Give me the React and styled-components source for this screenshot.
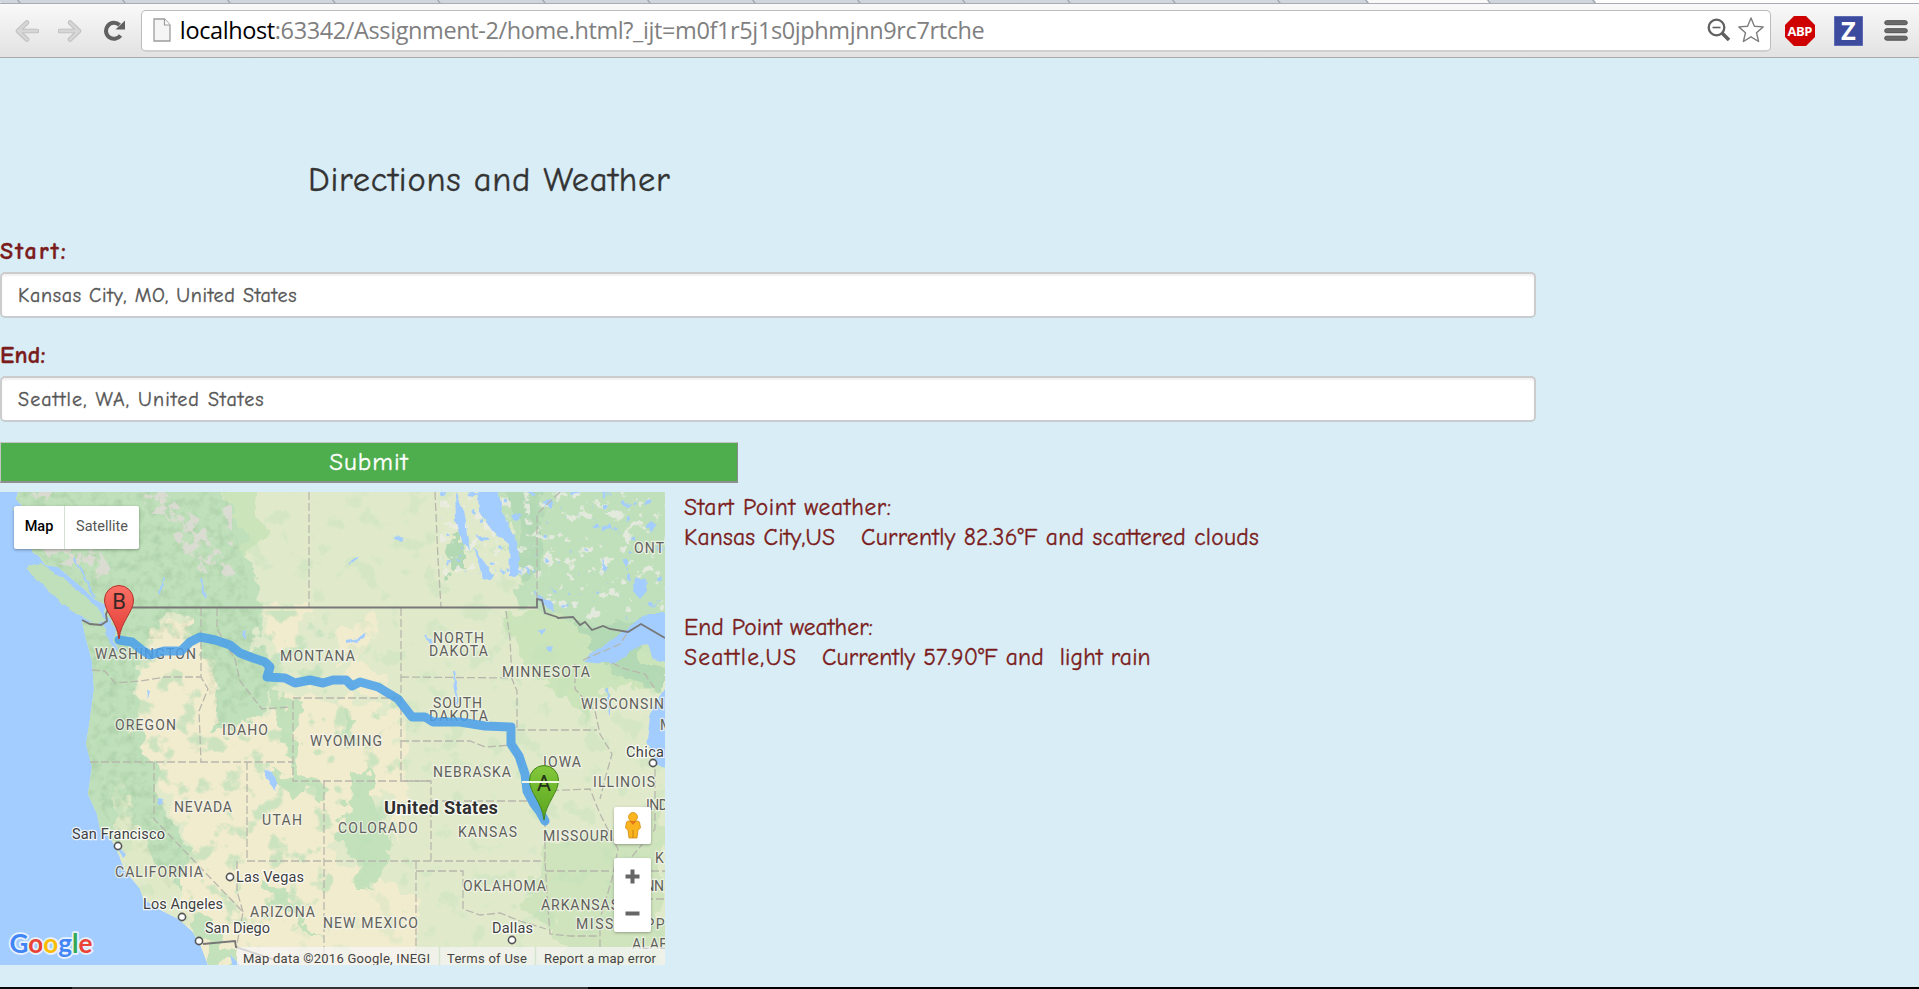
import React from 'react';
import styled, { createGlobalStyle } from 'styled-components';

const GlobalStyle = createGlobalStyle`
  * { box-sizing: border-box; }
  body { margin: 0; background: #d9edf7; overflow: hidden; }
`;

const casual = `"Comic Sans MS", "Comic Neue", "Open Sans", sans-serif`;

const Screen = styled.div`
  display: flex;
  flex-direction: column;
  width: 1919px;
  height: 989px;
  background: #d9edf6;
  overflow: hidden;
`;

/* ---------- browser chrome ---------- */
const TabStrip = styled.div`
  display: flex;
  height: 4px;
  overflow: hidden;
  background: #fdfdfd;
  border-bottom: 1px solid #a9adb3;
`;
const Tab = styled.div`
  width: ${(p) => p.$w}px;
  background: ${(p) => (p.$active ? '#f8f8f8' : '#d0d6de')};
  border-right: 2px solid #a4a9b0;
  transform: skewX(35deg);
`;
const Toolbar = styled.div`
  display: flex;
  align-items: center;
  height: 54px;
  padding: 0 11px 0 15px;
  background: linear-gradient(#f9f9f9, #e2e2e2);
  border-bottom: 1px solid #a9a9a9;
`;
const NavButtons = styled.div`
  display: flex;
  align-items: center;
  width: 126px;
`;
const Icon = styled.svg`
  display: block;
  flex: none;
  margin-left: ${(p) => p.$gap || 0}px;
`;
const Omnibox = styled.div`
  display: flex;
  align-items: center;
  width: 1632px;
  height: 42px;
  padding: 0 5px 0 11px;
  background: #fff;
  border: 1px solid #bcbcbc;
  border-bottom: 2px solid #cfcfcf;
  border-radius: 5px;
`;
const Url = styled.div`
  flex: 1;
  padding-left: 9px;
  font: 23.5px/34px "Open Sans", sans-serif;
  letter-spacing: ${(p) => p.$track}px;
  color: #808080;
  white-space: nowrap;
`;
const Host = styled.span`
  color: #000;
`;
const Extensions = styled.div`
  display: flex;
  align-items: center;
  margin-left: 14px;
`;

/* ---------- page ---------- */
const Page = styled.main`
  flex: 1;
  display: flex;
  flex-direction: column;
  align-items: flex-start;
  font-family: ${casual};
  -webkit-text-stroke: 0.35px currentColor;
`;
const Title = styled.h2`
  margin: 99px 0 0 308px;
  font-size: 34.5px;
  font-weight: 400;
  line-height: 46px;
  letter-spacing: ${(p) => p.$track}px;
  color: #333;
  white-space: nowrap;
`;
const Label = styled.label`
  display: block;
  height: 30px;
  margin-top: ${(p) => p.$top}px;
  font-size: 24px;
  font-weight: 700;
  line-height: 30px;
  letter-spacing: ${(p) => p.$track}px;
  color: #7b1c1c;
`;
const Input = styled.div`
  width: 1536px;
  height: 46px;
  margin-top: ${(p) => p.$top}px;
  padding-left: 16px;
  font-size: 20px;
  line-height: 43px;
  letter-spacing: ${(p) => p.$track}px;
  color: #555;
  background: #fff;
  border: 2px solid #ccc;
  border-bottom-color: #c8cbd0;
  border-radius: 5px;
  box-shadow: inset 0 2px 2px rgba(0, 0, 0, 0.06);
`;
const Submit = styled.button`
  display: block;
  width: 738px;
  height: 41px;
  margin-top: 20px;
  padding: 0;
  font-family: ${casual};
  font-size: 25px;
  line-height: 38px;
  letter-spacing: ${(p) => p.$track}px;
  text-align: center;
  color: #fff;
  background: #4eae4e;
  border: 1px solid #c4c4c4;
  border-right-color: #8a8a8a;
  border-bottom: 2px solid #8f8f8f;
`;
const Results = styled.section`
  display: flex;
  margin-top: 9px;
`;
const Weather = styled.div`
  display: flex;
  flex-direction: column;
  margin-left: 19px;
`;
const WeatherLine = styled.div`
  display: flex;
  height: 30px;
  margin-top: ${(p) => p.$top || 0}px;
  font-size: 23.5px;
  line-height: 32px;
  letter-spacing: ${(p) => p.$track}px;
  color: #7b1c1c;
  white-space: pre;
`;
const Place = styled.span`
  width: ${(p) => p.$w}px;
  letter-spacing: ${(p) => p.$track}px;
`;
const Taskbar = styled.div`
  display: flex;
  height: 2px;
  background: #000;
`;
const TaskbarPart = styled.div`
  width: ${(p) => p.$w}px;
  background: ${(p) => p.$c};
`;

/* ---------- map ---------- */
const MapFrame = styled.div`
  position: relative;
  width: 665px;
  height: 473px;
  overflow: hidden;
  font-family: Roboto, sans-serif;
  -webkit-text-stroke: 0;
`;
const MapTypes = styled.div`
  position: absolute;
  left: 14px;
  top: 14px;
  display: flex;
  height: 43px;
  background: #fff;
  border-radius: 2px;
  box-shadow: 0 1px 3px rgba(0, 0, 0, 0.35);
`;
const MapType = styled.div`
  width: ${(p) => p.$w}px;
  font-size: 14.5px;
  font-weight: ${(p) => (p.$on ? 500 : 400)};
  line-height: 42px;
  text-align: center;
  color: ${(p) => (p.$on ? '#000' : '#565656')};
  border-left: ${(p) => (p.$on ? 0 : '1px solid #d5e0d5')};
`;
const MapControls = styled.div`
  position: absolute;
  right: 14px;
  top: 315px;
  display: flex;
  flex-direction: column;
  gap: 14px;
`;
const Control = styled.div`
  display: flex;
  flex-direction: column;
  align-items: center;
  justify-content: center;
  width: 37px;
  height: ${(p) => p.$h}px;
  background: #fff;
  border-radius: 2px;
  box-shadow: 0 1px 3px rgba(0, 0, 0, 0.3);
`;

const states = [
  ['WASHINGTON', 95, 660, 101], ['MONTANA', 280, 661.5, 75], ['NORTH', 433, 643.5, 51],
  ['DAKOTA', 429, 657, 59], ['SOUTH', 433, 708.5, 49], ['DAKOTA', 429, 722, 59],
  ['MINNESOTA', 502, 677.5, 88], ['WISCONSIN', 581, 710, 83], ['ONT', 634, 553.5, 30],
  ['OREGON', 115, 730.5, 61], ['IDAHO', 222, 735.5, 46], ['WYOMING', 310, 746.5, 72],
  ['NEVADA', 174, 812.5, 58], ['UTAH', 262, 826, 40], ['CALIFORNIA', 115, 877.5, 88],
  ['ARIZONA', 250, 917.5, 65], ['NEW MEXICO', 323, 928.5, 95], ['COLORADO', 338, 834, 80],
  ['NEBRASKA', 433, 777.5, 78], ['KANSAS', 458, 838, 59], ['OKLAHOMA', 463, 892, 83],
  ['ARKANSAS', 541, 911, 78], ['MISSOURI', 543, 842, 70], ['IOWA', 543, 768, 38],
  ['ILLINOIS', 593, 788, 62], ['IND', 646, 811, 22], ['K', 655, 863.5, 9], ['TENN', 629, 892, 35],
  ['MISSISSIPPI', 576, 929.5, 94], ['ALAB', 632, 949.5, 36], ['M', 660, 730.5, 11],
];
const cities = [
  ['San Francisco', 72, 839.5, 93, 118, 847], ['Las Vegas', 236, 883, 68, 230, 878],
  ['Los Angeles', 143, 909.5, 80, 182, 918], ['San Diego', 205, 934, 65, 199, 942],
  ['Dallas', 492, 934, 41, 512, 941], ['Chica', 626, 757.5, 38, 653, 764],
];
const dashed = [
  'M309 493V608', 'M435 493L438 560 441 608', 'M560 493L537 515V600', 'M401 609V782H431V862',
  'M506 612L510 640 512 680 517 692V731', 'M401 678L512 679', 'M401 742H470L485 748 512 746 522 768',
  'M400 699H293V782H431', 'M247 862H545', 'M324 782V962', 'M247 763V862', 'M90 763H293',
  'M154 763V820L243 913 237 945', 'M237 862V892L243 913', 'M92 671L105 672 115 684 140 682 165 678H201',
  'M201 609V678L208 690 199 712 201 763', 'M217 609V630L235 660 240 682 262 710 290 708',
  'M416 862V960', 'M416 872H463V910L480 916 500 914 520 922 546 930', 'M431 802H530',
  'M545 820V862L547 895 550 935 570 937H600', 'M546 872H612', 'M517 731H597', 'M540 792L590 790 600 815 618 850 612 880 600 920V950',
  'M575 665V690L595 712 600 735 612 755 605 780 600 800', 'M612 664L625 670 645 675 655 690',
  'M583 661L620 645 628 633', 'M655 770V830L630 860', 'M640 872H665', 'M612 900H665',
];
const coast =
  'M18 493L16 500 22 507 12 510 25 520 34 535 32 553 39 557 45 566 58 568 72 580 84 590 94 600 106 606 104 614 112 622 108 634 103 626 82 622 86 640 92 662 94 690 90 720 86 745 92 768 88 795 97 815 100 830 111 840 118 854 125 872 140 890 143 900 160 911 178 920 192 932 200 945 208 966H232L230 955 240 966H665V493Z';

function MapDrawing() {
  return (
    <svg width="665" height="473" viewBox="0 493 665 473" style={{ display: 'block' }}>
      <defs>
        <filter id="rough" x="-10%" y="-10%" width="120%" height="120%">
          <feTurbulence type="fractalNoise" baseFrequency="0.055" numOctaves="3" seed="4" />
          <feDisplacementMap in="SourceGraphic" scale="30" xChannelSelector="R" yChannelSelector="G" />
        </filter>
        <filter id="edge" x="-5%" y="-5%" width="110%" height="110%">
          <feTurbulence type="fractalNoise" baseFrequency="0.1" numOctaves="2" seed="8" />
          <feDisplacementMap in="SourceGraphic" scale="6" xChannelSelector="R" yChannelSelector="G" />
        </filter>
        <filter id="snow" x="0" y="0" width="100%" height="100%" colorInterpolationFilters="sRGB">
          <feTurbulence type="fractalNoise" baseFrequency="0.09" numOctaves="5" seed="11" />
          <feColorMatrix values="0 0 0 0 .93  0 0 0 0 .93  0 0 0 0 .9  14 0 0 0 -8.6" />
        </filter>
        <filter id="peaks" x="0" y="0" width="100%" height="100%" colorInterpolationFilters="sRGB">
          <feTurbulence type="fractalNoise" baseFrequency="0.09" numOctaves="5" seed="2" />
          <feColorMatrix values="0 0 0 0 .88  0 0 0 0 .86  0 0 0 0 .84  10 0 0 0 -4.7" />
        </filter>
        <filter id="ponds" x="0" y="0" width="100%" height="100%" colorInterpolationFilters="sRGB">
          <feTurbulence type="fractalNoise" baseFrequency="0.09" numOctaves="3" seed="23" />
          <feColorMatrix values="0 0 0 0 .64  0 0 0 0 .8  0 0 0 0 1  14 0 0 0 -9.6" />
        </filter>
        <filter id="woods" x="0" y="0" width="100%" height="100%" colorInterpolationFilters="sRGB">
          <feTurbulence type="fractalNoise" baseFrequency="0.045" numOctaves="4" seed="37" />
          <feColorMatrix values="0 0 0 0 .75  0 0 0 0 .88  0 0 0 0 .73  9 0 0 0 -5.2" />
        </filter>
        <filter id="relief" x="0" y="0" width="100%" height="100%" colorInterpolationFilters="sRGB">
          <feTurbulence type="fractalNoise" baseFrequency="0.11" numOctaves="5" seed="5" />
          <feColorMatrix values="0 0 0 0 .5  0 0 0 0 .66  0 0 0 0 .5  2.4 0 0 0 -1.05" />
        </filter>
        <clipPath id="land"><path d={coast} /></clipPath>
        <clipPath id="summits"><path d="M25 493H52L44 506ZM142 493H165L180 508 200 520 212 540 236 575 226 578 200 560 208 575 195 570 175 540 165 515 145 515ZM40 545L60 545 100 552 112 572 104 588 90 575 70 568 50 562ZM222 505L232 505 232 540 238 550 228 545Z" /></clipPath>
        <clipPath id="shield"><path d="M520 493H665V615L600 625 520 590Z M440 493H520V580H440Z" /></clipPath>
        <clipPath id="west"><path d="M90 612H300L400 700 390 870 250 960 150 880 90 770Z M340 760H400V870H340Z" /></clipPath>
        <clipPath id="forest"><path d="M0 493H225L258 620 270 690 215 730 200 640 135 640V740L190 860 170 890 90 800Z" /></clipPath>
        <linearGradient id="red" x2="0" y2="1"><stop stopColor="#fb7064" /><stop offset="1" stopColor="#e03b35" /></linearGradient>
        <linearGradient id="green" x2="0" y2="1"><stop stopColor="#83c73c" /><stop offset="1" stopColor="#5aa51d" /></linearGradient>
      </defs>
      <rect y="493" width="665" height="473" fill="#a3ccff" />
      <g clipPath="url(#land)">
        <rect y="493" width="665" height="473" fill="#e0eacb" />
        <g filter="url(#rough)">
          <path fill="#f2eccf" d="M140 625H205L215 690 262 720 300 690 345 700 400 715 405 790 360 800 330 860 418 900V990H205L180 900 190 850 160 780 135 745Z" />
          <path fill="#f2eccf" d="M335 632L372 618 380 640 355 660 385 680 400 710 350 690ZM260 605H310L290 650 265 640ZM320 730H400V775H300Z" />
          <path fill="#bfe0ba" d="M-20 470H218L238 520 252 570 262 612 252 645 268 665 272 690 262 715 238 728 212 735 218 690 198 650 185 612 165 618 150 640 134 650 135 735 155 765 160 800 178 835 190 865 182 895 165 870 140 830 118 790 124 845 70 820 70 610 20 560Z" />
          <path fill="#dfe9c6" d="M112 785L128 795 140 840 178 882 175 905 150 900 125 870Z" />
          <path fill="#cce4ba" d="M225 480H255L262 530 250 560 242 540ZM500 612H665V690H600L585 725 565 700 540 680 515 650Z" />
          <path fill="#bfe0ba" d="M495 480H690V625L600 630 570 620 545 612 520 605 515 560Z" />
          <path fill="#b3d8b4" d="M500 480H550L537 515 540 580 520 585 520 530ZM580 625H640V660L665 670V690L625 685 600 665ZM445 540H465V575H450Z" />
          <path fill="#c3e1ba" d="M270 690L293 700 300 770 330 790 320 800 296 780 285 740ZM352 775L378 770 375 800 388 850 378 890 358 870 340 840ZM338 705L358 720 352 735ZM262 880L285 890 300 920 318 940 280 915ZM355 870H370V890H352ZM270 775L320 785 295 800ZM190 915L215 930 240 966H215Z" />
          <path fill="#cfe4bd" d="M545 840H620V990H590L545 920 520 910ZM600 840L665 800V990H600Z" />
          <path fill="#f2eccf" d="M395 780L408 800 395 840ZM140 662L182 665 190 740 155 755 133 735Z" />
        </g>
        <rect y="493" width="665" height="473" filter="url(#woods)" opacity=".3" />
        <g clipPath="url(#west)"><rect y="493" width="665" height="473" filter="url(#woods)" opacity=".6" /></g>
        <g clipPath="url(#forest)"><rect y="493" width="665" height="473" filter="url(#relief)" opacity=".25" /></g>
        <g clipPath="url(#summits)"><rect y="493" width="665" height="473" filter="url(#peaks)" opacity=".85" /></g>
        <g clipPath="url(#shield)">
          <rect y="493" width="665" height="473" filter="url(#snow)" opacity=".8" />
          <rect y="493" width="665" height="473" filter="url(#ponds)" />
        </g>
      </g>
      <g filter="url(#edge)">
        <path fill="#bfe0ba" d="M27 568L40 565 60 577 82 594 100 611 106 622 95 625 78 616 58 601 45 588 34 580Z" />
        <path fill="#a3ccff" d="M477 490H498L503 515 515 540 520 560 517 577 510 576 509 545 491 530 479 510ZM455 493L463 510 466 530 470 552 463 545 456 520ZM474 548L482 560 494 576 491 582 482 578 478 562ZM634 580L645 579 647 592 640 600 632 592ZM583 662L612 640 634 625 646 614H672V667L653 658 648 645 630 652 618 663 605 664ZM672 682L658 698 650 718 647 742 656 766 672 769ZM535 594L550 603 556 612 544 608ZM264 770L270 771 278 785 274 790 266 780ZM158 800L162 799 163 805 159 806ZM108 622L116 630 114 642 119 652 112 648 106 634ZM146 690L149 693 147 701ZM242 633L247 631 245 640ZM352 644L366 633 364 640ZM537 632L545 628 542 635ZM547 650L552 646 550 652ZM394 539L402 538 400 542ZM118 848L126 856 123 859Z" />
        <path fill="none" stroke="#a3ccff" strokeWidth="2" d="M163 580L160 595M201 580L206 600M453 672L458 700 455 710M360 640L345 642M425 635L432 645M75 558L95 600M348 565L358 558M607 690L610 715" />
      </g>
      <g fill="none" stroke="#b7b7ac" strokeWidth="1.3" strokeDasharray="8 3">
        {dashed.map((d) => <path key={d} d={d} />)}
      </g>
      <path fill="none" stroke="#777" strokeWidth="1.8" d="M82 621L90 625 101 626 107 622 106 615 109 608.5H537V600L542 601 545 614 557 618 558 619 573 618 580 626 585 623 592 631 603 627 610 630 628 633 641 625 665 639M203 945L235 942 236 948 275 961" />
      <g fontFamily="Roboto, sans-serif" fontSize="14" fill="#5f615c" stroke="#f5f5ec" strokeWidth="2.5" strokeOpacity=".75" style={{ paintOrder: 'stroke' }}>
        {states.map(([t, x, y, w]) => (
          <text key={t + y} x={x} y={y} textLength={w}>{t}</text>
        ))}
      </g>
      <path fill="none" stroke="#499fea" strokeOpacity=".86" strokeWidth="9" strokeLinecap="round" strokeLinejoin="round" d="M119 641L132 643 142 651 150 656 164 652 181 652 190 643 200 638 215 641 230 646 240 654 253 659 265 663 270 668 267 678 285 679 295 684 310 681 323 684 333 681 346 681 352 687 360 683 378 688 398 700 412 718 425 718 433 723 460 723 485 727 511 728V745L519 757 525 775 527 792 534 805 540 813 545 822" />
      <g fontFamily="Roboto, sans-serif" fontSize="14.5" fill="#404040" stroke="#fff" strokeWidth="2.5" strokeOpacity=".8" style={{ paintOrder: 'stroke' }}>
        {cities.map(([t, x, y, w]) => (
          <text key={t} x={x} y={y} textLength={w}>{t}</text>
        ))}
        <text x="384" y="814.5" textLength="114" fontSize="18.3" fontWeight="700" fill="#303030">United States</text>
      </g>
      <g fill="#fff" stroke="#555" strokeWidth="1.6">
        {cities.map(([t, , , , cx, cy]) => <circle key={t} cx={cx} cy={cy} r="3.6" />)}
      </g>
      <path fill="url(#red)" stroke="#b3312d" d="M119 640C117 622 104.500 613 104.500 601A14.500 14.500 0 0 1 133.500 601C133.500 613 121 622 119 640Z" />
      <path fill="url(#green)" stroke="#47851b" d="M544 821C542 803 529.500 794 529.500 781A14.500 14.500 0 0 1 558.500 781C558.500 794 546 803 544 821Z" />
      <g fontFamily="Roboto, sans-serif" fontSize="22" textAnchor="middle" fill="#3a2826">
        <text x="119" y="609.500">B</text>
        <text x="544" y="791.500" fill="#25351a">A</text>
      </g>
      <path d="M522 783H559" stroke="#f2f8e6" strokeWidth="1.8" />
      <rect x="237" y="948" width="428" height="18" fill="#f5f5f5" fillOpacity=".72" />
      <path d="M439.500 948V966M535.500 948V966" stroke="#d5e5cd" strokeWidth="1.500" />
      <g fontFamily="Roboto, sans-serif" fontSize="13" fill="#444">
        <text x="243" y="964" textLength="187">Map data ©2016 Google, INEGI</text>
        <text x="447" y="964" textLength="80">Terms of Use</text>
        <text x="544" y="964" textLength="112">Report a map error</text>
      </g>
      <text x="9.500" y="954" textLength="83" lengthAdjust="spacingAndGlyphs" fontFamily="Lato, sans-serif" fontWeight="700" fontSize="26" stroke="#e8f2ff" strokeWidth="3.500" strokeLinejoin="round" style={{ paintOrder: 'stroke' }}>
        <tspan fill="#4285f4">G</tspan><tspan fill="#ea4335">o</tspan><tspan fill="#fbbc05">o</tspan><tspan fill="#4285f4">g</tspan><tspan fill="#34a853">l</tspan><tspan fill="#ea4335">e</tspan>
      </text>
    </svg>
  );
}

function WeatherMap() {
  return (
    <MapFrame>
      <MapDrawing />
      <MapTypes>
        <MapType $w={50} $on>Map</MapType>
        <MapType $w={75}>Satellite</MapType>
      </MapTypes>
      <MapControls>
        <Control $h={37}>
          <svg width="16" height="27" viewBox="0 0 16 27">
            <path d="M1.500 10Q2 9 4 9H12Q14 9 14.500 10L15.500 16 13 18 12 26H4L3 18 .5 16Z" fill="#f9b420" stroke="#d08b12" strokeWidth=".8" />
            <circle cx="8" cy="5" r="4.500" fill="#fbb51f" stroke="#d3901b" strokeWidth=".8" />
            <path d="M4.500 9H11.500L8 13Z" fill="#e2761b" />
            <path d="M8 18V26" stroke="#c9820e" />
          </svg>
        </Control>
        <Control $h={74}>
          <svg width="15" height="52" viewBox="0 0 15 52">
            <path d="M7.500 .5V14.500M.5 7.500H14.500M.5 44.500H14.500" stroke="#666" strokeWidth="4" />
          </svg>
        </Control>
      </MapControls>
    </MapFrame>
  );
}

function BrowserChrome() {
  return (
    <>
      <TabStrip>
        {[20, 105, 105, 105, 105, 105, 105, 105, 105, 105, 105, 105, 105, 88].map((w, i) => <Tab key={i} $w={w} />)}
        <Tab $w={122} $active />
        <Tab $w={105} />
      </TabStrip>
      <Toolbar>
        <NavButtons>
          <Icon width="24" height="22" viewBox="0 0 24 22" fill="none" strokeLinecap="round" strokeLinejoin="round">
            <path d="M12 2.500L3 11 12 19.500M3.500 11H22" stroke="#bdbdbd" strokeWidth="4.500" />
            <path d="M12 2.500L3 11 12 19.500M3.500 11H22" stroke="#d6d6d6" strokeWidth="2.800" />
          </Icon>
          <Icon $gap={19} width="24" height="22" viewBox="0 0 24 22" fill="none" strokeLinecap="round" strokeLinejoin="round">
            <path d="M12 2.500L21 11 12 19.500M20.500 11H2" stroke="#bdbdbd" strokeWidth="4.500" />
            <path d="M12 2.500L21 11 12 19.500M20.500 11H2" stroke="#d6d6d6" strokeWidth="2.800" />
          </Icon>
          <Icon $gap={22} width="22" height="22" viewBox="0 0 22 22">
            <path d="M16.500 15.500A8 8 0 1 1 15.500 5" fill="none" stroke="#606060" strokeWidth="4" />
            <path d="M21 0.500V9.500H11.500Z" fill="#606060" />
          </Icon>
        </NavButtons>
        <Omnibox>
          <Icon width="18" height="24" viewBox="0 0 18 24">
            <path d="M1 1H11.500L17 7V23H1Z" fill="#f5f5f5" stroke="#9c9c9c" strokeWidth="1.300" />
            <path d="M11.500 1V7H17" fill="#fff" stroke="#9c9c9c" strokeWidth="1.200" />
          </Icon>
          <Url $track={-0.39}>
            <Host>localhost</Host>:63342/Assignment-2/home.html?_ijt=m0f1r5j1s0jphmjnn9rc7rtche
          </Url>
          <Icon width="24" height="24" viewBox="0 0 24 24" fill="none" stroke="#606060">
            <circle cx="9.500" cy="9.500" r="7.800" strokeWidth="2.300" />
            <path d="M5.500 9.500H13.500" strokeWidth="1.600" />
            <path d="M15 15L22 22" strokeWidth="3.600" />
          </Icon>
          <Icon $gap={6} width="28" height="28" viewBox="0 0 28 28">
            <path d="M14 2L17.400 10.200 26.200 10.900 19.500 16.700 21.600 25.500 14 20.800 6.400 25.500 8.500 16.700 1.800 10.900 10.600 10.200Z" fill="#fff" stroke="#7d7d7d" strokeWidth="1.400" strokeLinejoin="round" />
          </Icon>
        </Omnibox>
        <Extensions>
          <Icon width="30" height="30" viewBox="0 0 30 30">
            <path d="M9 0H21L30 9V21L21 30H9L0 21V9Z" fill="#ce0000" />
            <text x="15" y="19.800" textAnchor="middle" textLength="25" fontFamily="Open Sans, sans-serif" fontWeight="700" fontSize="13" fill="#fff">ABP</text>
          </Icon>
          <Icon $gap={19} width="29" height="30" viewBox="0 0 29 30">
            <rect width="29" height="30" fill="#3c4b9d" stroke="#7f8bc8" />
            <text x="14.500" y="24" textAnchor="middle" fontFamily="Open Sans, sans-serif" fontWeight="700" fontSize="25.500" fill="#fff">Z</text>
          </Icon>
          <Icon $gap={21} width="24" height="22" viewBox="0 0 24 22">
            <g fill="#6b6b6b" stroke="#505050">
              <rect x=".7" y=".7" width="22.600" height="4" rx="2" />
              <rect x=".7" y="8.700" width="22.600" height="4" rx="2" />
              <rect x=".7" y="16.200" width="22.600" height="4" rx="2" />
            </g>
          </Icon>
        </Extensions>
      </Toolbar>
    </>
  );
}

export default function App() {
  return (
    <Screen>
      <GlobalStyle />
      <BrowserChrome />
      <Page>
        <Title $track={0.75}>Directions and Weather</Title>
        <Label $top={33} $track={2.1}>Start:</Label>
        <Input $top={6} $track={0.7}>Kansas City, MO, United States</Input>
        <Label $top={22} $track={0.2}>End:</Label>
        <Input $top={6} $track={1.15}>Seattle, WA, United States</Input>
        <Submit $track={1}>Submit</Submit>
        <Results>
          <WeatherMap />
          <Weather>
            <WeatherLine $track={0.65}>Start Point weather:</WeatherLine>
            <WeatherLine $track={0.3}><Place $w={177} $track={0.25}>Kansas City,US</Place>Currently 82.36°F and scattered clouds</WeatherLine>
            <WeatherLine $top={60} $track={0.1}>End Point weather:</WeatherLine>
            <WeatherLine $track={0.15}><Place $w={138} $track={1.3}>Seattle,US</Place>Currently 57.90°F and  light rain</WeatherLine>
          </Weather>
        </Results>
      </Page>
      <Taskbar>
        <TaskbarPart $w={72} $c="#0a0a0a" />
        <TaskbarPart $w={516} $c="#333" />
      </Taskbar>
    </Screen>
  );
}
